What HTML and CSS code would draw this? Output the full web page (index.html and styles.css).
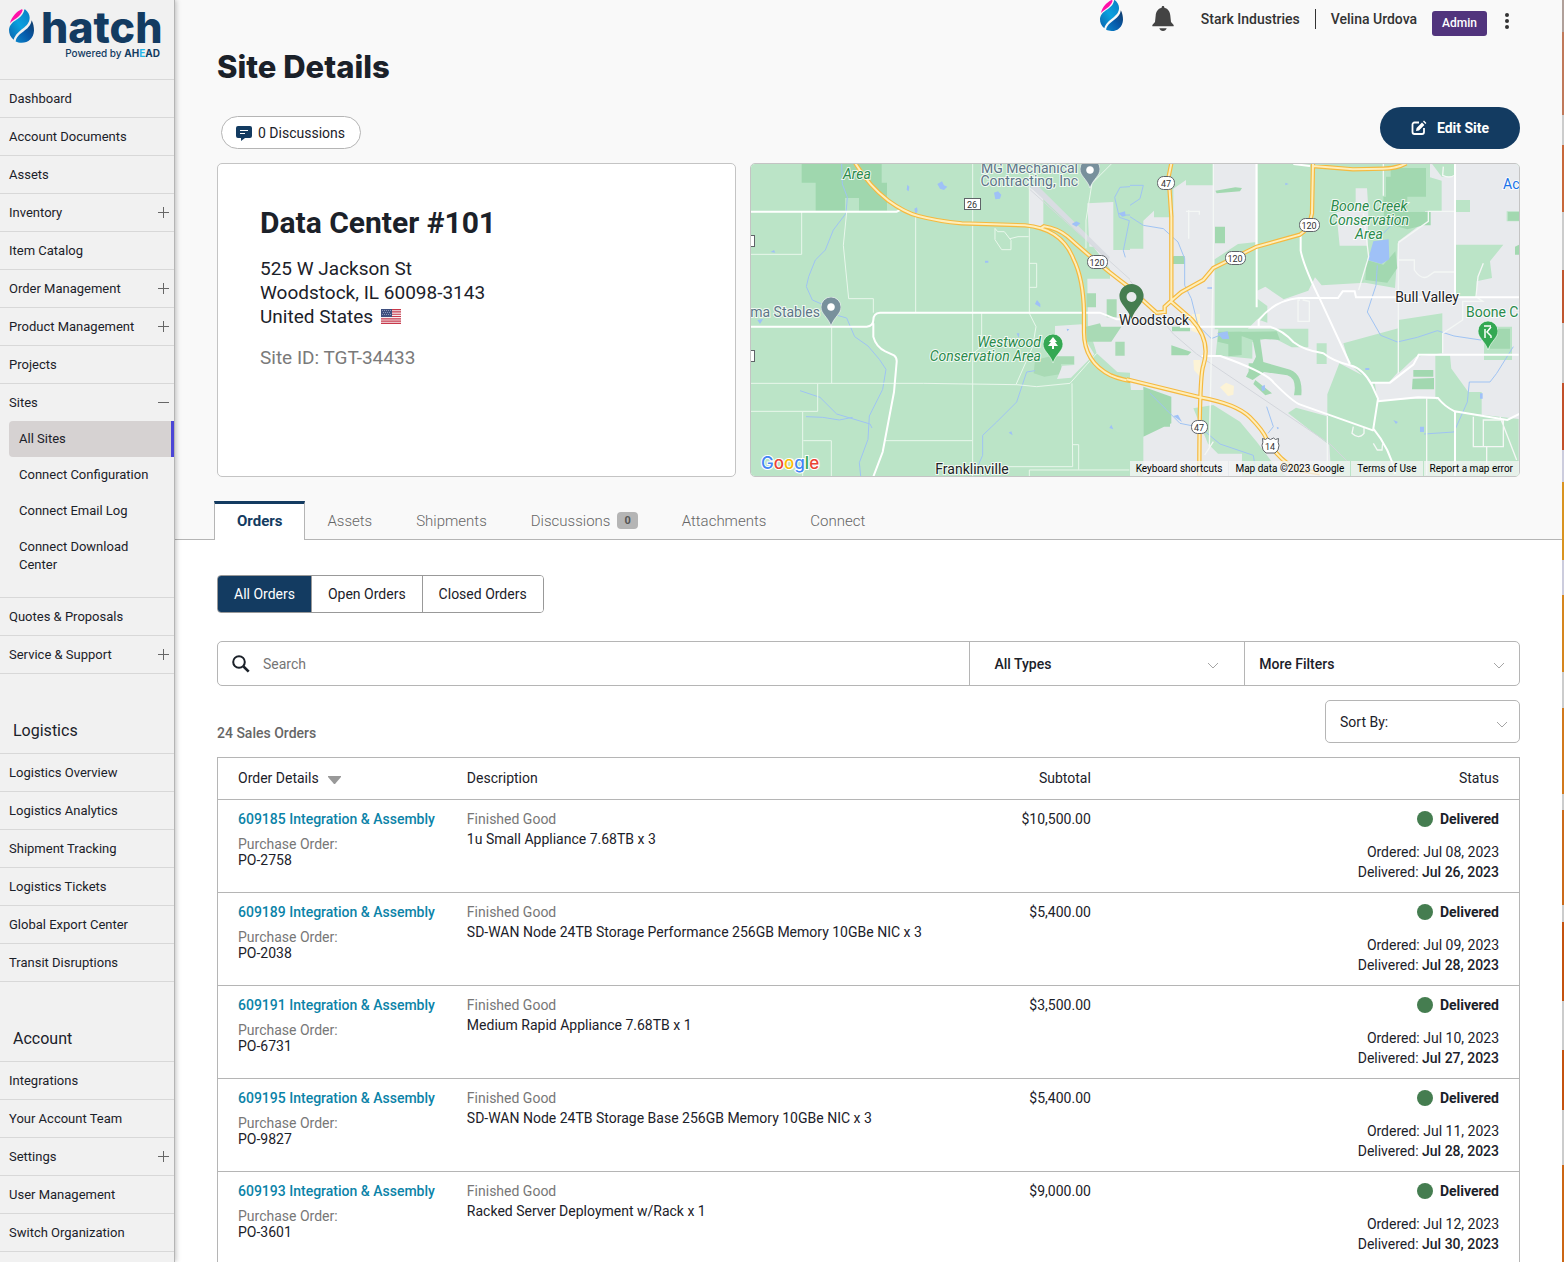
FILE: index.html
```html
<!DOCTYPE html>
<html lang="en">
<head>
<meta charset="utf-8">
<meta name="viewport" content="width=device-width, initial-scale=1">
<title>Site Details</title>
<link rel="stylesheet" href="styles.css">
</head>
<body>
<svg class="defs" aria-hidden="true">
  <defs>
    <linearGradient id="midblue" x1="0" y1="1" x2="1" y2="0"><stop offset="0" stop-color="#0a63ad"/><stop offset=".5" stop-color="#0aa0de"/><stop offset="1" stop-color="#0b7cc4"/></linearGradient>
    <linearGradient id="deepblue" x1="0" y1="1" x2="1" y2="0"><stop offset="0" stop-color="#0a86cc"/><stop offset=".5" stop-color="#0658a8"/><stop offset="1" stop-color="#123a63"/></linearGradient>
    <symbol id="drop" viewBox="0 0 75 101">
      <path fill="#ff10a8" d="M38 0C24 6 8 22 3 42 14 30 34 24 41 3 41 1 39 0 38 0Z"/>
      <path fill="url(#midblue)" d="M48 0C57 8 62 16 62 26 62 56 24 60 14 92 4 84 0 74 0 62 4 30 40 34 46 1Z"/>
      <path fill="url(#deepblue)" d="M68 33C73 43 75 53 75 64 74 87 58 101 38 101 31 101 25 99 20 97 24 68 63 66 68 33Z"/>
    </symbol>
    <symbol id="chevron" viewBox="0 0 12 8"><path d="M1 1l5 5 5-5" fill="none" stroke="#a5a5a5"/></symbol>
    <symbol id="pin" viewBox="0 0 20 29"><path d="M10 0a10 10 0 0 1 10 10c0 7-7 10-10 19C7 20 0 17 0 10A10 10 0 0 1 10 0z"/></symbol>
  </defs>
</svg>
<div class="app">
  <nav class="sidebar" aria-label="Main">
    <a class="brand" href="#" aria-label="hatch, powered by AHEAD">
      <svg width="170" height="70" viewBox="0 0 170 70">
        <use href="#drop" x="9" y="9" width="25" height="34"/>
        <text class="wordmark" x="41" y="43">hatch</text>
        <text class="tagline" x="160" y="57" text-anchor="end">Powered by <tspan class="ahead">AH<tspan class="ahead-e">E</tspan>AD</tspan></text>
      </svg>
    </a>
    <ul class="menu">
      <li><a href="#">Dashboard</a></li>
      <li><a href="#">Account Documents</a></li>
      <li><a href="#">Assets</a></li>
      <li><a class="plus" href="#">Inventory</a></li>
      <li><a href="#">Item Catalog</a></li>
      <li><a class="plus" href="#">Order Management</a></li>
      <li><a class="plus" href="#">Product Management</a></li>
      <li><a href="#">Projects</a></li>
      <li>
        <a class="plus open" href="#">Sites</a>
        <ul class="submenu">
          <li><a class="current" href="#" aria-current="page">All Sites</a></li>
          <li><a href="#">Connect Configuration</a></li>
          <li><a href="#">Connect Email Log</a></li>
          <li><a href="#">Connect Download Center</a></li>
        </ul>
      </li>
      <li><a href="#">Quotes &amp; Proposals</a></li>
      <li><a class="plus" href="#">Service &amp; Support</a></li>
    </ul>
    <h2 class="menu-title">Logistics</h2>
    <ul class="menu">
      <li><a href="#">Logistics Overview</a></li>
      <li><a href="#">Logistics Analytics</a></li>
      <li><a href="#">Shipment Tracking</a></li>
      <li><a href="#">Logistics Tickets</a></li>
      <li><a href="#">Global Export Center</a></li>
      <li><a href="#">Transit Disruptions</a></li>
    </ul>
    <h2 class="menu-title">Account</h2>
    <ul class="menu">
      <li><a href="#">Integrations</a></li>
      <li><a href="#">Your Account Team</a></li>
      <li><a class="plus" href="#">Settings</a></li>
      <li><a href="#">User Management</a></li>
      <li><a href="#">Switch Organization</a></li>
    </ul>
  </nav>

  <main class="page">
    <header class="head">
      <div class="topbar">
        <svg class="top-drop" width="25" height="31" viewBox="0 0 25 31" role="img" aria-label="hatch"><use href="#drop" width="25" height="31"/></svg>
        <button class="icon-btn bell" type="button" aria-label="Notifications">
          <svg width="22" height="25" viewBox="0 0 66 75" fill="#444"><path d="M33 0c3 0 4 2 4 5 12 3 17 12 18 24l2 19 8 9v4H1v-4l8-9 2-19C12 17 17 8 29 5c0-3 1-5 4-5z"/><path d="M22 67h22c-1 5-6 8-11 8s-10-3-11-8z"/></svg>
        </button>
        <span class="org">Stark Industries</span>
        <span class="user">Velina Urdova</span>
        <span class="role">Admin</span>
        <button class="icon-btn" type="button" aria-label="More options">
          <svg width="6" height="16" viewBox="0 0 6 16" fill="#333"><circle cx="3" cy="2" r="2"/><circle cx="3" cy="8" r="2"/><circle cx="3" cy="14" r="2"/></svg>
        </button>
      </div>
      <h1>Site Details</h1>
      <div class="actions">
        <button class="pill" type="button">
          <svg width="16" height="16" viewBox="0 0 16 16"><path fill="#133b61" d="M2 1h12a2 2 0 0 1 2 2v8a2 2 0 0 1-2 2H9l-4 3v-3H2a2 2 0 0 1-2-2V3a2 2 0 0 1 2-2z"/><path stroke="#fff" d="M4 5.500h8M4 8.500h5" stroke-width="1.200"/></svg>
          0 Discussions
        </button>
        <button class="edit" type="button">
          <svg width="16" height="16" viewBox="0 0 16 16" fill="none" stroke="#fff" stroke-width="1.800"><path d="M8 2.500H3.500a2 2 0 0 0-2 2V12a2 2 0 0 0 2 2H11a2 2 0 0 0 2-2V8"/><path d="M5 11l.6-3L11 2.600 13.400 5 8 10.400zM12 1.600l1-1L15.400 3l-1 1z" fill="#fff" stroke="none"/></svg>
          Edit Site
        </button>
      </div>
      <div class="cards">
        <section class="site">
          <h2>Data Center #101</h2>
          <address>525 W Jackson St<br>Woodstock, IL 60098-3143<br>United States
            <svg class="flag" width="20" height="15" viewBox="0 0 20 15" role="img" aria-label="US flag"><path fill="#f7eff0" d="M0 0h20v15H0z"/><path stroke="#c8394b" stroke-width="1.150" d="M0 .6h20M0 2.900h20M0 5.200h20M0 7.500h20M0 9.800h20M0 12.100h20M0 14.400h20"/><path fill="#40507f" d="M0 0h11v8H0z"/><path stroke="#8d98b8" stroke-dasharray="1 1" d="M1 1.500h9M2 3.500h8M1 5.500h9"/></svg>
          </address>
          <p>Site ID: TGT-34433</p>
        </section>
        <section class="map" aria-label="Map of Woodstock">
          <svg class="map-art" viewBox="0 0 768 312" preserveAspectRatio="xMidYMid slice">
            <rect width="768" height="312" fill="#bbe4c7"/>
            <!-- west tile -->
            <g transform="translate(-1 -4) scale(.33333)">
              <path fill="#9fd7ae" d="M155 10h240v58h16v84h-84v-38h-42v38h-88v-84h-42z"/>
              <path fill="#a9dab5" d="M855 600l60-14h58v26h-40v30l-50 8-32-10z"/>
              <path fill="#e8eaed" d="M838 80l42 30v90h-42zM1012 130l78-4v144h80v680h-8V640l-60-4-62-56-26-84-2-140h68v-30l-50-66h-12zM915 498l80-5 8 40 30 50-70 70-42 4 16-40 36-2v-26h-58z"/>
              <path fill="#a9dab5" d="M1008 500l42-10 4 10h60l-30 45h-72zM1096 545h28v42h-28zM1010 400h28v42h-28zM1070 418h30v54h-30z"/>
              <path fill="#d9dce2" d="M840 80l24-2 216 214-8 8z"/><path fill="none" stroke="#d5d8dd" stroke-width="3" d="M830 80l340 305"/>
              <g fill="none" stroke="#9fc3f3" stroke-width="3">
                <path d="M275 12l2 60 15 40-4 48-38 50-24 60-30 30-20 50-7 30 18 40 32 14M262 466l28 8 24 56 40 28 34 40 20 30-10 60-40 80-4 70-26 70 4 40M150 692l60 20 50 50 100 30 6 12M168 770l50 2 50 8 40-8"/>
                <path d="M855 632l-25 4-30 90-60 60-42 40v60l-18 40"/>
                <path d="M1170 78l-60 4-16 30 14 60 30 10-18 90 6 20M1115 165h40"/>
              </g>
              <g fill="#9fc1f7"><path d="M562 72l14-8 6 12 10 4-10 10-12-4zM732 98l12-4 10 10-4 12-14 2zM965 192l14-8 12 6-12 10zM493 146l8-4 2 10-6 12zM472 74l6 6-2 14-6-4zM855 432l6-12 10 12v10zM22 480l18-4-10 16zM62 276l10-6 4 8zM1078 804l6-10 6 14zM776 818l8-4 4 12zM1105 160l20-6 2 14-10 2zM800 520l8 0-2 14zM950 506l8 2-6 6zM705 302h10v6h-10zM1146 764h12v6h-12z"/></g>
              <g fill="none" stroke="#e9f7ec" stroke-width="3">
                <path d="M155 155v128H0M290 156l-10 100 16 160h74v42M497 165v292M668 12v600M245 500v170M0 670h520l280 4 60 6 100-10 80-90M203 672v82H0M158 756v195M160 842h84v108M405 842h262M838 30v430l20 40-10 60-50 114M695 460v100l-26 20M735 205v34l20 30h28v-28l-20-26h-20zM780 236l24-6h32M838 310h22v72h-22M1008 265V180l18-110 60-60M966 670l2 250h-200M968 854h18v75M838 950v-20h300M668 612v340"/>
              </g>
              <g fill="none" stroke="#fff">
                <path stroke-width="6" d="M0 155h440l20-10M0 500h350q20-2 20-20 0-20 20-22h660l50 20h40M370 490v40q8 30 36 44l26 12q9 6 8 20l-8 90-34 180-28 74"/>
              </g>
              <g fill="none" stroke="#f5b93f" stroke-width="13"><path d="M315 8q40 68 100 114 50 36 90 46 60 16 130 22l190 6q110 10 145 100 30 60 32 160v60q0 90 80 130 30 14 90 22M872 205l10-6q40 6 70 30 100 90 190 156"/></g>
              <g fill="none" stroke="#feeebb" stroke-width="6"><path d="M315 8q40 68 100 114 50 36 90 46 60 16 130 22l190 6q110 10 145 100 30 60 32 160v60q0 90 80 130 30 14 90 22M872 205l10-6q40 6 70 30 100 90 190 156"/></g>
            </g>
            <!-- east tile -->
            <g transform="translate(379 -4) scale(.33333)">
              <path fill="#e8eaed" d="M30 10h1140v940H30l-30-290V180l40-20z"/>
              <path fill="#bbe4c7" d="M0 10h250v66h-82v-16l-38 26v86H72v-20l-32 30v84H0zM380 10h520v42l35 10v92h-50v30l-80 60-10 140-90-16-130 8-20-24-20 40-74 26-55-38-24 12v24l30 22v50l-30-10-30 30H254V298l70-46 56-6zM677 85v60l-58 12 10 100h84l2-112-4-60zM976 254h144l-40 50 6 50-46 10v46h-62zM640 550l165-45v130l-30 34-56-4-60-52zM805 480l132-20v120l-80 10-52 50zM628 610l106 55 8 56 174-6 60 40 190 22v174H604l-6-96-124-96 24-16 94 26v-66zM0 690h40v260H0zM265 506h270v56h-50l-58-30-60 14v50l-110-10zM1062 500h84v100h-84zM1130 154h38v30h-38zM978 120h42v36h-42zM960 586h-44v130l60 38zM190 745l60-10 80 50 50 60 60 80 30 22H336v-66h-72l-30-30zM905 10h70v40h-40zM960 620h-40v90l55 46 80 10v-70h-40zM560 550h30v62h-30z"/>
              <path fill="#a2d8b0" d="M782 24h106v86h-120V50h14zM760 110h72v46h70v40h-20l-50 12-70-20zM710 300l50 14 36-40 6 50-30 44-66-8zM848 656l64-2v34h-66zM40 680l84 30v80l-84 40zM60 730h60v70H60zM124 556l60 20-10 10h-50zM126 500h54v14h-54zM130 288h34v24h-40zM256 92l60-10 20 2-6 10-70 6zM255 200h30v50h-30zM265 515h70v70l-40 4v-36l-32-8zM300 516l140-2 10 26-60-4 10 70 70 20q50 10 44 80h-22q10-50-20-60l-70-10-34 24-20-10 30-60-10-50zM356 610h40v30h-40zM376 660l50 40-20 6-36-34zM850 630h60v20h-60zM1080 506h60v60h-60zM1155 260l12-6v30h-12zM1134 156h34v26h-34z"/>
              <path fill="#fcf3d6" d="M186 462h24v60l-26-10zM190 600h20v50l-18-20zM270 682l18-14 24 10-2 26-16 4z"/>
              <path fill="#9fc1f7" d="M730 244l46-6 2 60-24 14-40-12zM262 520l30-6 6 22-20 2zM394 680l10-6 2 16-10 4zM870 800h12v16h-12zM790 780l14 6-6 6zM1050 700h8v16h-8zM130 768l14-4 12 22zM706 624h12v6h-12zM440 800l8 4-6 4zM232 382h14v4h-14zM466 68l10 4-10 4z"/>
              <g fill="none" stroke="#9fc3f3" stroke-width="3"><path d="M0 170l40 26 60 10 44 40 20 50v80l20 40 20 80 40 40 50-20M742 316l-4 60-26 80 40 70 50 20 60-14 60-20 50 16 80 12 50-40M1150 560l-50 80-20 26h-62l-6 60-40 90-90 6M60 700l50 50 40 40 60 12 60 50 100 34 10 64M410 740l20 60-16 20M740 240l60-60M0 76h40l-10 40-30 20"/></g>
              <g fill="none" stroke="#d3d6dc" stroke-width="3"><path d="M0 362l130 160 70 60 400 270 60 60"/></g>
              <g fill="none" stroke="#f4f7f5" stroke-width="4"><path d="M250 12v300M760 12v95M700 160l16 130-30 100M805 250v390M805 248l90-64v-30h80M805 300h48v30q20 30 40 20l20-14h60M1060 310l-16 40-6 60 20 14h-60v56l-60 40v60M592 768v180M250 300l-12 560M890 715v230M1030 770v90h40v60M1060 780h60v80h-60zM1110 770l50 130M510 420h-6v64h34v-60l-20-4M670 800l-4 20q20 20 36 0v-16M730 850l12 20h14l2-20M250 845l-26 40M176 150v86M168 154h40v10M940 20l-2 26q20 10 36 0M378 12v250"/></g>
              <g fill="none" stroke="#fff" stroke-width="6"><path d="M380 12v430M975 12v394M150 500h270q40 12 70 46 30 24 90 34 30 24 80 36 40 10 66 60l18 40-14 90q50 60 66 136M386 500v-20q50-60 120-66h118l14-20h36l4 18h490M512 222v50q10 50 60 150l88 190M215 588h56q140 50 160 80 60 60 80 66l220 78M724 668h56l70-54 16-30h300M744 724l120-12 60 2q20 26 50 40l158 26 36-18M975 754v194M490 12l50 6"/></g>
              <path fill="none" stroke="#f5b93f" stroke-width="13" d="M124 10l-8 40 8 120v255M549 10l-3 150q-10 50-36 64l-130 36-130 64-30 36-66 36-30 26-20 18v16l-24 2-38-34-50-40M124 425l60 52q60 64 36 140-12 30-12 330M549 18l120 10 90-2q40 0 70-16M-10 658l220 54q110 20 150 60 40 40 50 66 34 60 90 90l70 12"/>
              <path fill="none" stroke="#feeebb" stroke-width="6" d="M124 10l-8 40 8 120v255M549 10l-3 150q-10 50-36 64l-130 36-130 64-30 36-66 36-30 26-20 18v16l-24 2-38-34-50-40M124 425l60 52q60 64 36 140-12 30-12 330M549 18l120 10 90-2q40 0 70-16M-10 658l220 54q110 20 150 60 40 40 50 66 34 60 90 90l70 12"/>
            </g>
            <g class="shield">
              <rect x="406.500" y="12.500" width="17" height="13" rx="6"/><text x="415" y="23">47</text>
              <rect x="336.500" y="91.500" width="20" height="13" rx="6"/><text x="346" y="102">120</text>
              <rect x="474.500" y="87.500" width="20" height="13" rx="6"/><text x="484" y="98">120</text>
              <rect x="548.500" y="54.500" width="20" height="13" rx="6"/><text x="558" y="65">120</text>
              <rect x="440.500" y="256.500" width="16" height="13" rx="6"/><text x="448" y="267">47</text>
              <path d="M511.500 274.500l3 1 2-1.500 3 1.500 3-1.500 2 1.500 3-1q-1 4 0.500 7 0 5-4 7.500h-9q-4-2.500-4-7.500 1.500-3 .5-7z"/><text x="519" y="286">14</text>
              <rect x="213.500" y="34.500" width="16" height="11"/><text x="221" y="44">26</text>
              <rect x="-6.500" y="71.500" width="10" height="11"/><rect x="-6.500" y="186.500" width="10" height="11"/>
            </g>
            <g stroke="#fff" stroke-width=".6">
              <use href="#pin" x="329" y="-5" width="20" height="29" fill="#78909c"/><circle cx="339" cy="6" r="3.500" fill="#fff"/>
              <use href="#pin" x="70" y="133" width="20" height="29" fill="#78909c"/><circle cx="80" cy="143" r="3.500" fill="#fff"/>
              <use href="#pin" x="292" y="170" width="20" height="29" fill="#34a853"/>
              <use href="#pin" x="727" y="157" width="20" height="29" fill="#34a853"/>
            </g>
            <path fill="#fff" d="M302 173l4 5h-2l3 4h-4v3h-2v-3h-4l3-4h-2z"/>
            <path fill="none" stroke="#fff" stroke-width="1.500" d="M733 162h7M734 165v9M740 163l-4 5 4 4v2"/>
            <g class="places">
              <text x="92" y="15" class="park">Area</text>
              <text x="327" y="9" class="shop" text-anchor="end">MG Mechanical</text>
              <text x="327" y="22" class="shop" text-anchor="end">Contracting, Inc</text>
              <text x="69" y="153" class="shop" text-anchor="end">ma Stables</text>
              <text x="290" y="183" class="park" text-anchor="end">Westwood</text>
              <text x="290" y="197" class="park" text-anchor="end">Conservation Area</text>
              <text x="618" y="47" class="park" text-anchor="middle">Boone Creek</text>
              <text x="618" y="61" class="park" text-anchor="middle">Conservation</text>
              <text x="618" y="75" class="park" text-anchor="middle">Area</text>
              <text x="715" y="153" class="golf">Boone C</text>
              <text x="752" y="25" class="link">Ac</text>
              <text x="403" y="161" text-anchor="middle">Woodstock</text>
              <text x="676" y="138" text-anchor="middle">Bull Valley</text>
              <text x="221" y="310" text-anchor="middle">Franklinville</text>
            </g>
            <use href="#pin" x="368" y="120" width="25" height="35" fill="#457d50"/><circle cx="380.500" cy="133" r="5" fill="#e8eaed"/>
            <text class="google" x="10" y="305"><tspan fill="#4285f4">G</tspan><tspan fill="#ea4335">o</tspan><tspan fill="#fbbc04">o</tspan><tspan fill="#4285f4">g</tspan><tspan fill="#34a853">l</tspan><tspan fill="#ea4335">e</tspan></text>
          </svg>
          <div class="map-legal">
            <button type="button">Keyboard shortcuts</button>
            <span>Map data ©2023 Google</span>
            <a href="#">Terms of Use</a>
            <a href="#">Report a map error</a>
          </div>
        </section>
      </div>
      <nav class="tabs" aria-label="Site sections">
        <a class="active" href="#">Orders</a>
        <a href="#">Assets</a>
        <a href="#">Shipments</a>
        <a href="#">Discussions <span class="count">0</span></a>
        <a href="#">Attachments</a>
        <a href="#">Connect</a>
      </nav>
    </header>

    <section class="orders">
      <div class="segments">
        <button class="on" type="button">All Orders</button>
        <button type="button">Open Orders</button>
        <button type="button">Closed Orders</button>
      </div>
      <form class="filters">
        <div class="search">
          <svg width="18" height="18" viewBox="0 0 18 18" fill="none" stroke="#1b2129" stroke-width="2"><circle cx="7" cy="7" r="5.800"/><path stroke-width="2.600" d="M11.500 11.500l5.200 5.200"/></svg>
          <input type="search" placeholder="Search" aria-label="Search">
        </div>
        <div class="pick types">
          <select aria-label="Order type"><option>All Types</option></select>
          <svg width="12" height="8"><use href="#chevron"/></svg>
        </div>
        <div class="pick more">
          <select aria-label="More filters"><option>More Filters</option></select>
          <svg width="12" height="8"><use href="#chevron"/></svg>
        </div>
      </form>
      <div class="summary">
        <p>24 Sales Orders</p>
        <div class="pick sort">
          <select aria-label="Sort by"><option>Sort By:</option></select>
          <svg width="12" height="8"><use href="#chevron"/></svg>
        </div>
      </div>
      <table>
        <colgroup><col class="c-order"><col class="c-desc"><col class="c-sub"><col class="c-status"></colgroup>
        <thead>
          <tr><th scope="col">Order Details <svg class="caret" width="13" height="8" viewBox="0 0 13 8"><path fill="#999" d="M0 0h13v1L7 8H6L0 1z"/></svg></th><th scope="col">Description</th><th scope="col" class="num">Subtotal</th><th scope="col" class="num">Status</th></tr>
        </thead>
        <tbody>
          <tr>
            <td><a href="#">609185 Integration &amp; Assembly</a><div class="po"><span>Purchase Order:</span><br>PO-2758</div></td>
            <td><span class="muted">Finished Good</span><br>1u Small Appliance 7.68TB x 3</td>
            <td class="num">$10,500.00</td>
            <td class="num"><div class="state">Delivered</div><div class="dates">Ordered: Jul 08, 2023<br>Delivered: <b>Jul 26, 2023</b></div></td>
          </tr>
          <tr>
            <td><a href="#">609189 Integration &amp; Assembly</a><div class="po"><span>Purchase Order:</span><br>PO-2038</div></td>
            <td><span class="muted">Finished Good</span><br>SD-WAN Node 24TB Storage Performance 256GB Memory 10GBe NIC x 3</td>
            <td class="num">$5,400.00</td>
            <td class="num"><div class="state">Delivered</div><div class="dates">Ordered: Jul 09, 2023<br>Delivered: <b>Jul 28, 2023</b></div></td>
          </tr>
          <tr>
            <td><a href="#">609191 Integration &amp; Assembly</a><div class="po"><span>Purchase Order:</span><br>PO-6731</div></td>
            <td><span class="muted">Finished Good</span><br>Medium Rapid Appliance 7.68TB x 1</td>
            <td class="num">$3,500.00</td>
            <td class="num"><div class="state">Delivered</div><div class="dates">Ordered: Jul 10, 2023<br>Delivered: <b>Jul 27, 2023</b></div></td>
          </tr>
          <tr>
            <td><a href="#">609195 Integration &amp; Assembly</a><div class="po"><span>Purchase Order:</span><br>PO-9827</div></td>
            <td><span class="muted">Finished Good</span><br>SD-WAN Node 24TB Storage Base 256GB Memory 10GBe NIC x 3</td>
            <td class="num">$5,400.00</td>
            <td class="num"><div class="state">Delivered</div><div class="dates">Ordered: Jul 11, 2023<br>Delivered: <b>Jul 28, 2023</b></div></td>
          </tr>
          <tr>
            <td><a href="#">609193 Integration &amp; Assembly</a><div class="po"><span>Purchase Order:</span><br>PO-3601</div></td>
            <td><span class="muted">Finished Good</span><br>Racked Server Deployment w/Rack x 1</td>
            <td class="num">$9,000.00</td>
            <td class="num"><div class="state">Delivered</div><div class="dates">Ordered: Jul 12, 2023<br>Delivered: <b>Jul 30, 2023</b></div></td>
          </tr>
        </tbody>
      </table>
    </section>
  </main>
  <div class="edge"></div>
</div>
</body>
</html>
```
FILE: styles.css
```css
* { box-sizing: border-box; }
body {
  margin: 0;
  font: 14px/20px Roboto, "Liberation Sans", sans-serif;
  color: #1b2129;
  background: #fff;
}
a { color: inherit; text-decoration: none; }
ul { list-style: none; margin: 0; padding: 0; }
h1, h2, p { margin: 0; }
button, input, select { font: inherit; color: inherit; }
button { cursor: pointer; }
.defs { display: block; width: 0; height: 0; }

.app { display: flex; height: 100vh; overflow: hidden; }

/* Sidebar */
.sidebar {
  flex: none;
  width: 175px;
  background: #f1f1f1;
  border-right: 1px solid #b5b5b5;
  box-shadow: 1px 0 5px rgba(0, 0, 0, .25);
  overflow: hidden;
  z-index: 1;
  font-size: 13px;
}
.brand { display: block; height: 79px; }
.brand svg { display: block; }
.wordmark { font: 800 43px Inter, sans-serif; fill: #133b61; }
.tagline { font: 500 10px Inter, sans-serif; fill: #133b61; }
.ahead { font-weight: 700; }
.ahead-e { fill: #1fb5e8; }
.menu { border-top: 1px solid #d8d8d8; }
.menu > li { border-bottom: 1px solid #d8d8d8; }
.menu > li > a {
  display: flex;
  align-items: center;
  justify-content: space-between;
  height: 37px;
  padding: 0 5px 0 9px;
}
.plus::after {
  content: "";
  width: 11px;
  height: 11px;
  background:
    linear-gradient(#666, #666) center / 11px 1px no-repeat,
    linear-gradient(#666, #666) center / 1px 11px no-repeat;
}
.plus.open::after { background: linear-gradient(#666, #666) center / 11px 1px no-repeat; }
.submenu { padding: 0 0 14px 9px; }
.submenu a { display: block; padding: 9px 30px 9px 10px; line-height: 18px; }
.submenu li:nth-child(-n+3) a { padding-right: 0; }
.submenu .current {
  background: #d6d2d2;
  border-right: 3px solid #4b45d6;
  border-radius: 4px 0 0 4px;
}
.menu-title { padding: 46px 13px 12px; font-size: 16px; line-height: 21px; font-weight: 400; }

/* Page head */
.page { flex: 1; min-width: 0; overflow: hidden; }
.head { padding: 0 42px; background: #f9f9f9; border-bottom: 1px solid #b5b5b5; }
.topbar {
  display: flex;
  justify-content: flex-end;
  align-items: flex-start;
  height: 40px;
  padding-right: 10px;
  color: #333;
  font-weight: 500;
}
.icon-btn { border: 0; padding: 0; background: none; margin-top: 13px; }
.icon-btn svg { display: block; }
.bell { margin: 6px 27px 0 28px; }
.org, .user { margin-top: 9px; }
.org { padding-right: 15px; border-right: 1px solid #333; }
.user { padding: 0 15px; }
.role {
  margin: 11px 17px 0 0;
  padding: 0 10px;
  border-radius: 3px;
  background: #51347d;
  color: #fff;
  font-size: 12px;
  line-height: 25px;
}
h1 { font: 800 31px/54px Inter, sans-serif; }
.actions { display: flex; align-items: flex-end; justify-content: space-between; margin-top: 13px; }
.pill {
  display: flex;
  align-items: center;
  gap: 6px;
  height: 33px;
  margin-left: 4px;
  padding: 0 15px 0 14px;
  border: 1px solid #b5b5b5;
  border-radius: 17px;
  background: #fff;
}
.edit {
  display: flex;
  align-items: center;
  justify-content: center;
  gap: 10px;
  width: 140px;
  height: 42px;
  border: 0;
  border-radius: 21px;
  background: #133b61;
  color: #fff;
  font-weight: 700;
}
.cards { display: grid; grid-template-columns: 519fr 770fr; gap: 14px; margin-top: 14px; }
.site, .map { min-height: 314px; border: 1px solid #c4c4c4; border-radius: 5px; background: #fff; }
.site { padding: 40px 42px; }
.site h2 { font-size: 30px; line-height: 38px; font-weight: 700; }
.site address { margin-top: 15px; font-size: 19px; line-height: 24px; font-style: normal; }
.site p { margin-top: 17px; font-size: 19px; line-height: 24px; color: #7a7a7a; }
.flag { margin-left: 3px; vertical-align: -1px; }

/* Map */
.map { position: relative; overflow: hidden; }
.map-art { position: absolute; inset: 0; width: 100%; height: 100%; }
.map-art text { font-family: Roboto, sans-serif; }
.places text { font-size: 14px; fill: #202124; stroke: #fff; stroke-width: 2px; stroke-opacity: .8; paint-order: stroke; }
.places .park { fill: #2a8a4b; font-style: italic; }
.places .shop { fill: #5d7587; }
.places .golf { fill: #2a8a4b; }
.places .link { fill: #1a73e8; }
.shield rect, .shield path { fill: #fff; stroke: #5f6368; }
.shield text { font-size: 9px; text-anchor: middle; fill: #333; }
.map-art .google { font: 500 17px Inter, sans-serif; stroke: #fff; stroke-width: 2px; paint-order: stroke; }
.map-legal {
  position: absolute;
  right: 0;
  bottom: 0;
  display: flex;
  gap: 1px;
  font-size: 10px;
  line-height: 15px;
}
.map-legal > * { padding: 0 6px; border: 0; background: rgba(245, 245, 245, .75); color: #000; }

/* Tabs */
.tabs { display: flex; margin: 24px 0 -1px -3px; }
.tabs a {
  display: flex;
  align-items: center;
  gap: 7px;
  height: 39px;
  padding: 0 22px;
  color: #666;
  font-size: 15px;
  font-weight: 300;
}
.tabs .active {
  border: 1px solid #b5b5b5;
  border-width: 3px 1px 0;
  border-top-color: #133b61;
  padding: 0 22px 3px;
  background: #fff;
  color: #133b61;
  font-weight: 700;
}
.count {
  padding: 0 7px;
  border-radius: 4px;
  background: #b5b5b5;
  color: #555;
  font-size: 11px;
  line-height: 17px;
  font-weight: 700;
}

/* Orders */
.orders { padding: 35px 42px 0; }
.segments { display: inline-flex; vertical-align: top; border: 1px solid #999; border-radius: 4px; overflow: hidden; }
.segments button { height: 36px; padding: 0 16px; border: 0; background: #fff; }
.segments button + button { border-left: 1px solid #999; }
.segments .on { background: #133b61; color: #fff; }
.filters {
  display: grid;
  grid-template-columns: 752fr 275fr 275fr;
  height: 45px;
  margin-top: 28px;
  border: 1px solid #b5b5b5;
  border-radius: 5px;
  overflow: hidden;
}
.search { display: flex; align-items: center; gap: 13px; padding-left: 14px; }
.search input { flex: 1; min-width: 0; height: 100%; border: 0; padding: 0; background: none; outline: 0; }
.search input::placeholder { color: #757575; opacity: 1; }
.pick { position: relative; }
.filters .pick { border-left: 1px solid #b5b5b5; }
.pick select { width: 100%; height: 100%; border: 0; padding: 0 14px; appearance: none; background: none; }
.pick svg { position: absolute; right: 14px; top: 20px; pointer-events: none; }
.filters select { font-weight: 500; }
.types select { padding-left: 24px; }
.types svg { right: 25px; }
.summary { display: flex; justify-content: space-between; align-items: flex-end; margin: 14px 0; }
.summary p { color: #666; font-weight: 500; }
.sort { width: 195px; height: 43px; border: 1px solid #b5b5b5; border-radius: 5px; }
.sort svg { right: 11px; }
table { width: 100%; table-layout: fixed; border-collapse: collapse; border: 1px solid #b5b5b5; }
.c-order { width: 18%; }
.c-desc { width: 40%; }
.c-sub { width: 11%; }
th { height: 42px; padding: 0 20px 2px; text-align: left; font-weight: 400; }
td { padding: 9px 20px 10px; vertical-align: top; }
th:first-child, td:first-child { padding-right: 0; }
th:nth-child(2), td:nth-child(2) { padding-left: 15px; padding-right: 0; }
th:nth-child(3), td:nth-child(3) { padding-right: 25px; }
tbody tr { border-top: 1px solid #b5b5b5; }
.num { text-align: right; }
td a { color: #0b83a8; font-weight: 500; white-space: nowrap; }
.po { margin-top: 7px; line-height: 16px; }
.po span, .muted { color: #777; }
.caret { margin-left: 6px; vertical-align: -1px; }
.state { display: flex; justify-content: flex-end; align-items: center; gap: 7px; font-weight: 700; }
.state::before { content: ""; width: 16px; height: 16px; border-radius: 50%; background: #457d50; }
.dates { margin-top: 13px; }
.dates b { font-weight: 500; }

/* Sliver of desktop wallpaper at the window edge */
.edge {
  flex: none;
  width: 2px;
  background: linear-gradient(#b0a09a 32px, #c0795a 32px 115px, #ccc 115px 145px, #c8683a 145px 212px, #ccc 212px 270px, #c0562f 270px 323px, #ccc 323px 383px, #c2502a 383px 450px, #ccd 450px 482px, #d99320 482px 560px, #ccd 560px 595px, #d6861e 595px 672px, #ccc 672px 708px, #d2791c 708px 794px, #ccc 794px 810px, #cb6a1a 810px 905px, #ccc 905px 922px, #c4520f 922px 1001px, #ccc 1001px 1050px, #c4520f 1050px 1110px, #ccc 1110px 1165px, #cc6614 1165px);
}
```
